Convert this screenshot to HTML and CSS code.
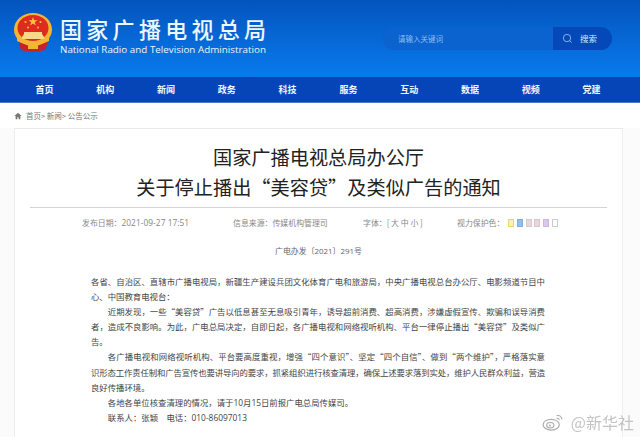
FILE: index.html
```html
<!DOCTYPE html>
<html lang="zh-CN">
<head>
    <meta charset="UTF-8">
    <title>国家广播电视总局办公厅</title>
    <link rel="stylesheet" href="styles.css">
</head>
<body>
<header class="top">
    <svg class="emblem" viewBox="0 0 40 40" aria-hidden="true">
        <path d="M6 30h28v3l-2 5q-12 3-24 0l-2-5z" fill="#c9202a"/>
        <ellipse cx="20" cy="17.500" rx="19" ry="16.500" fill="#f2b632"/>
        <ellipse cx="20" cy="16" rx="15.500" ry="13" fill="#df2a20"/>
        <polygon points="20,5 21.100,8.200 24.500,8.200 21.800,10.200 22.800,13.400 20,11.500 17.200,13.400 18.200,10.200 15.500,8.200 18.900,8.200" fill="#f6c33c"/>
        <circle cx="12.500" cy="10" r="1.100" fill="#f6c33c"/>
        <circle cx="27.500" cy="10" r="1.100" fill="#f6c33c"/>
        <circle cx="15" cy="15.500" r="1" fill="#f6c33c"/>
        <circle cx="25" cy="15.500" r="1" fill="#f6c33c"/>
        <path d="M11 20h18v2l2 3v2H9v-2l2-3z" fill="#f8d98a"/>
        <path d="M4 26q16 9 32 0v3q-16 8-32 0z" fill="#f2b632"/>
        <rect x="15" y="31" width="10" height="6" fill="#f2b632"/>
    </svg>
    <div class="brand">
        <div class="brand-cn">国家广播电视总局</div>
        <div class="brand-en">National Radio and Television Administration</div>
    </div>
    <div class="search">
        <span class="search-input">请输入关键词</span>
        <span class="search-btn">
            <svg class="search-icon" viewBox="0 0 12 12" aria-hidden="true">
                <circle cx="5.500" cy="5.500" r="4" fill="none" stroke="#9cc4f0" stroke-width="0.900"/>
                <path d="M8.500 8.500l2 2" stroke="#9cc4f0" stroke-width="0.900"/>
            </svg>
            搜索
        </span>
    </div>
</header>
<nav class="nav">
    <a>首页</a>
    <a>机构</a>
    <a>新闻</a>
    <a>政务</a>
    <a>科技</a>
    <a>服务</a>
    <a>互动</a>
    <a>数据</a>
    <a>视频</a>
    <a>党建</a>
</nav>
<div class="crumb">
    <svg class="home" viewBox="0 0 10 10" aria-hidden="true">
        <path d="M5 1L0.500 5h1.500v4h2.200V6.500h1.600V9H8V5h1.500z" fill="#777"/>
    </svg>
    <span>首页&gt; 新闻&gt; 公告公示</span>
</div>
<main class="card">
    <h1 class="title">国家广播电视总局办公厅<br>关于停止播出“美容贷”及类似广告的通知</h1>
    <div class="meta">
        <span class="meta-date">发布日期：<span class="num">2021-09-27 17:51</span></span>
        <span class="meta-source">信息来源：传媒机构管理司</span>
        <span class="meta-font">字体：[ 大 中 小 ]</span>
        <span class="meta-eye">视力保护色：</span>
        <span class="swatches">
            <i class="sw sw-yellow"></i>
            <i class="sw sw-blue"></i>
            <i class="sw sw-rose"></i>
            <i class="sw sw-pink"></i>
            <i class="sw sw-purple"></i>
            <i class="sw sw-white"></i>
        </span>
    </div>
    <div class="docno">广电办发〔<span class="num">2021</span>〕<span class="num">291</span>号</div>
    <div class="body">
        <p>各省、自治区、直辖市广播电视局，新疆生产建设兵团文化体育广电和旅游局，中央广播电视总台办公厅、电影频道节目中心、中国教育电视台：</p>
        <p class="ind">近期发现，一些“美容贷”广告以低息甚至无息吸引青年，诱导超前消费、超高消费，涉嫌虚假宣传、欺骗和误导消费者，造成不良影响。为此，广电总局决定，自即日起，各广播电视和网络视听机构、平台一律停止播出“美容贷”及类似广告。</p>
        <p class="ind">各广播电视和网络视听机构、平台要高度重视，增强“四个意识”、坚定“四个自信”、做到“两个维护”，严格落实意<span class="tight">识形态工作责任制和广告宣传也要讲导向的要求，抓紧组织进行核查清理，确保上述要求落到实处，维护人民群众利益，营造</span>良好传播环境。</p>
        <p class="ind">各地各单位核查清理的情况，请于<span class="num">10</span>月<span class="num">15</span>日前报广电总局传媒司。</p>
        <p class="ind">联系人：张颖　电话：<span class="num">010-86097013</span></p>
    </div>
</main>
<div class="mark">
    <svg class="weibo" viewBox="0 0 24 20" aria-hidden="true">
        <ellipse cx="10" cy="13" rx="9" ry="6" fill="none" stroke="#aaa" stroke-width="1.300"/>
        <ellipse cx="9" cy="13.500" rx="4" ry="3" fill="none" stroke="#aaa" stroke-width="1.200"/>
        <circle cx="8.500" cy="14" r="1.100" fill="#aaa"/>
        <path d="M16 3q5-1 6 4M16 6q2.500-.5 3 2" fill="none" stroke="#aaa" stroke-width="1.200"/>
    </svg>
    <span>@新华社</span>
</div>
</body>
</html>
```

FILE: styles.css
```css
html, body {
    margin: 0;
    padding: 0;
}
body {
    width: 640px;
    height: 437px;
    overflow: hidden;
    position: relative;
    background: #fbfbfb;
    font-family: "Noto Sans CJK SC", "Liberation Sans", sans-serif;
    color: #444;
    filter: blur(0.35px);
}
.num {
    font-family: "Open Sans", "Liberation Sans", sans-serif;
}

/* header */
.top {
    height: 77px;
    display: flex;
    align-items: flex-start;
    background: linear-gradient(#0354bd, #097bed);
}
.emblem {
    width: 40px;
    height: 40px;
    margin: 12px 0 0 13px;
}
.brand {
    margin: 13px 0 0 7px;
    width: 270px;
    color: #eef6ff;
}
.brand-cn {
    font-size: 22px;
    line-height: 30px;
    letter-spacing: 4.300px;
    font-weight: 500;
}
.brand-en {
    font-family: "Open Sans", "Liberation Sans", sans-serif;
    font-size: 9.800px;
    line-height: 14px;
    letter-spacing: 0.020px;
    white-space: nowrap;
}
.search {
    margin: 27px 0 0 53px;
    width: 229px;
    height: 23px;
    display: flex;
    border-radius: 12px;
    overflow: hidden;
    background: #0a63cf;
    font-size: 7.500px;
    line-height: 23px;
}
.search-input {
    width: 155px;
    padding-left: 15px;
    color: #8fbdf0;
}
.search-btn {
    flex: 1;
    display: flex;
    align-items: center;
    background: #0549b9;
    color: #d8e8fb;
    font-size: 8.500px;
    padding-left: 9px;
    gap: 7px;
}
.search-icon {
    width: 11px;
    height: 11px;
}

/* nav */
.nav {
    height: 25px;
    display: grid;
    grid-template-columns: repeat(10, 60.800px);
    padding-left: 14px;
    background: #0645b8;
    border-bottom: 1px solid #4a78cf;
}
.nav a {
    text-align: center;
    color: #f2f6ff;
    font-size: 9px;
    font-weight: 700;
    line-height: 25px;
}

/* breadcrumb */
.crumb {
    height: 25px;
    display: flex;
    align-items: center;
    gap: 4px;
    padding-left: 14px;
    background: #fff;
    font-size: 7.500px;
    color: #777;
}
.home {
    width: 8px;
    height: 8px;
}

/* article */
.card {
    width: 609px;
    margin-left: 14px;
    height: 310px;
    background: #fff;
    border-top: 1px solid #e9e9e9;
    border-left: 1px solid #eee;
    border-right: 1px solid #eee;
    box-sizing: border-box;
}
.title {
    margin: 13px 15px 0;
    padding-bottom: 5px;
    border-bottom: 1px solid #d4d4d4;
    text-align: center;
    font-size: 19.200px;
    line-height: 30px;
    font-weight: 400;
    color: #222;
}
.meta {
    display: flex;
    align-items: center;
    height: 14px;
    margin-top: 8px;
    padding-left: 67px;
    font-size: 7.900px;
    line-height: 14px;
    color: #888;
    white-space: nowrap;
}
.meta-date { width: 151px; }
.meta-date .num { font-size: 8.400px; letter-spacing: 0.030px; }
.meta-source { width: 130px; }
.meta-font { width: 94px; }
.meta-eye { width: 51px; }
.swatches {
    display: flex;
    gap: 2.800px;
}
.sw {
    width: 6px;
    height: 8px;
    box-sizing: border-box;
    border: 1px solid #ccc;
}
.sw-yellow { background: #f8f2b0; border-color: #e8d870; }
.sw-blue { background: #8fc0ea; border-color: #7fb0e0; }
.sw-rose { background: #e8d8dc; border-color: #d8c8d0; }
.sw-pink { background: #ead4e0; border-color: #dcc4d4; }
.sw-purple { background: #d8c8ee; border-color: #c8b8e4; }
.sw-white { background: #fff; border-color: #ccc; }
.docno {
    margin-top: 14px;
    text-align: center;
    font-size: 7.900px;
    line-height: 14px;
    color: #666;
}
.body {
    margin: 16px 77px 0 76px;
    font-size: 8.400px;
    line-height: 15.100px;
    color: #444;
}
.body p {
    margin: 0;
    text-align: justify;
}
.body .ind {
    text-indent: 2em;
}
/* reference fits one more char on this line */
.tight {
    letter-spacing: -0.160px;
}

/* watermark */
.mark {
    position: absolute;
    right: 6px;
    bottom: 4px;
    display: flex;
    align-items: center;
    gap: 7px;
    font-size: 16px;
    line-height: 22px;
    color: rgba(170, 170, 170, 0.7);
}
.weibo {
    width: 22px;
    height: 18px;
}
```
